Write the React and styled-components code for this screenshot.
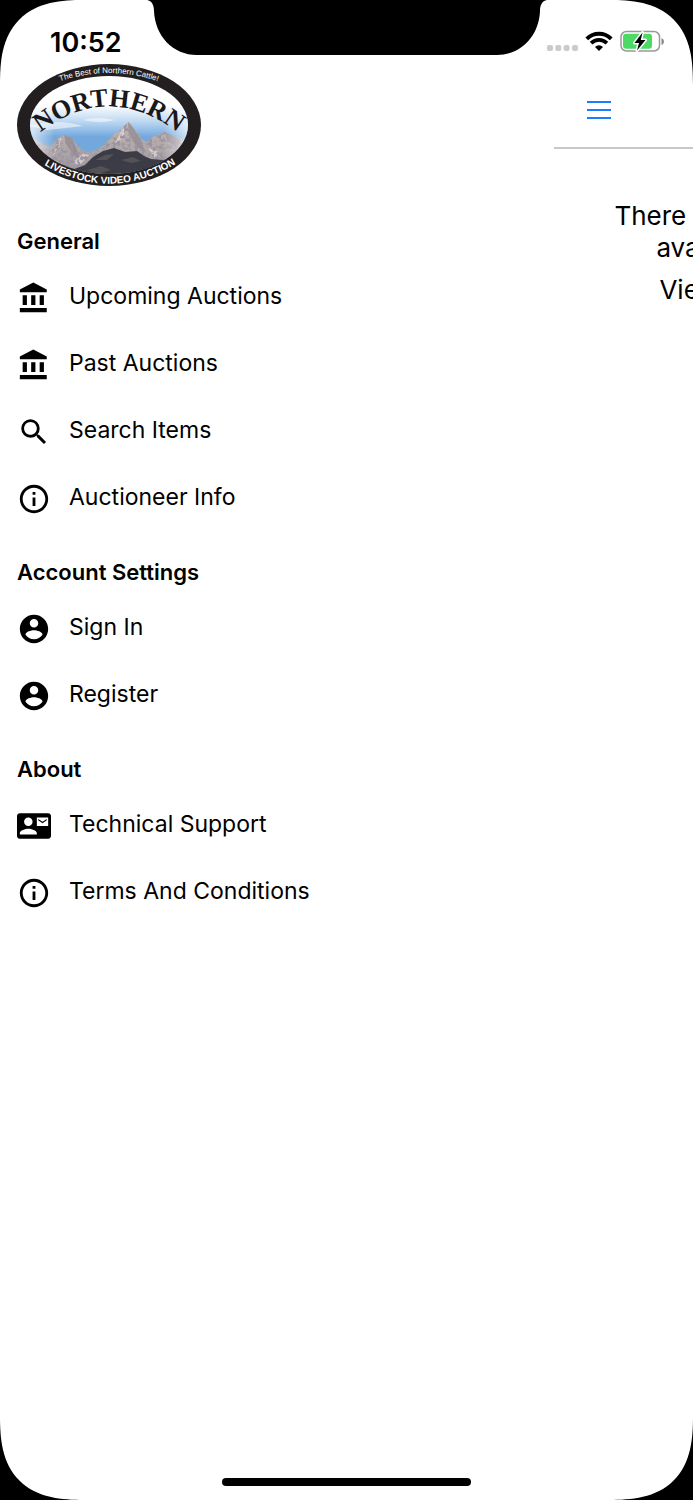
import React from "react";
import styled, { createGlobalStyle } from "styled-components";

const GlobalStyle = createGlobalStyle`
  * { box-sizing: border-box; }
  body {
    margin: 0;
    background: #000;
    color: #000;
    font-family: Inter, "Liberation Sans", sans-serif;
  }
`;

const Screen = styled.div`
  position: relative;
  display: flex;
  flex-direction: column;
  min-height: 100vh;
  background: #fff;
  overflow: hidden;
  border-radius: 72px;
  @supports (corner-shape: superellipse(1.4)) {
    border-radius: 84px;
    corner-shape: superellipse(1.4);
  }
`;

const Notch = styled.svg`
  position: absolute;
  top: 0;
  left: 50%;
  transform: translateX(-50%);
`;

const StatusBar = styled.header`
  display: flex;
  justify-content: space-between;
  align-items: flex-end;
  height: 64px;
  padding: 0 29px 12px 50px;
`;

const Clock = styled.time`
  font-size: 27px;
  line-height: 18px;
  font-weight: 600;
`;

const StatusIcons = styled.div`
  display: flex;
  align-items: flex-end;
  gap: 7px;
`;

const Content = styled.div`
  display: flex;
  flex: 1;
`;

const Drawer = styled.nav`
  flex: 0 0 80%;
  min-width: 0;
  padding-left: 17px;
`;

const LogoLink = styled.a`
  display: block;
  width: 184px;
  height: 122px;
  margin-bottom: 32px;
`;

const Section = styled.section`
  margin-bottom: 17px;
`;

const Heading = styled.h2`
  margin: 0;
  font-size: 22px;
  line-height: 46px;
  font-weight: 600;
`;

const List = styled.ul`
  margin: 0;
  padding: 0;
  list-style: none;
`;

const Item = styled.a`
  display: flex;
  align-items: center;
  gap: 18px;
  height: 67px;
  color: #000;
  text-decoration: none;
`;

const ItemIcon = styled.svg`
  flex: none;
  width: 34px;
  height: 34px;
  fill: currentColor;
`;

const ItemLabel = styled.span`
  padding-bottom: 4px;
  font-size: 23px;
  line-height: 32px;
`;

const Page = styled.main`
  flex: 1;
  min-width: 0;
  overflow: hidden;
`;

const PageBar = styled.div`
  display: flex;
  align-items: center;
  height: 85px;
  padding: 8px 0 0 33px;
  border-bottom: 2px solid #c8c8c8;
`;

const MenuButton = styled.button`
  display: flex;
  flex-direction: column;
  gap: 6px;
  width: 24px;
  padding: 0;
  border: 0;
  background: none;
`;

const MenuLine = styled.span`
  height: 2px;
  background: #1a7dff;
`;

const Message = styled.div`
  padding-top: 51px;
  font-size: 26px;
  line-height: 32px;
  white-space: nowrap;
`;

const MessageLine = styled.div`
  padding-left: ${(p) => p.$indent}px;
  margin-bottom: ${(p) => (p.$last ? 10 : 0)}px;
`;

const HomeIndicator = styled.div`
  align-self: center;
  width: 36%;
  height: 8px;
  margin-bottom: 14px;
  border-radius: 4px;
  background: #000;
`;

const PATHS = {
  bank: "M4 10v7h3v-7H4zm6 0v7h3v-7h-3zM2 22h19v-3H2v3zm14-12v7h3v-7h-3zm-4.500-9L2 6v2h19V6l-9.500-5z",
  search:
    "M15.500 14h-.79l-.28-.27A6.471 6.471 0 0 0 16 9.500 6.500 6.500 0 1 0 9.500 16c1.610 0 3.090-.590 4.230-1.570l.270.280v.790l5 4.990L20.490 19l-4.990-5zm-6 0C7.010 14 5 11.990 5 9.500S7.010 5 9.500 5 14 7.010 14 9.500 11.990 14 9.500 14z",
  info: "M11 17h2v-6h-2v6zm1-15C6.480 2 2 6.480 2 12s4.480 10 10 10 10-4.480 10-10S17.520 2 12 2zm0 18c-4.410 0-8-3.590-8-8s3.590-8 8-8 8 3.590 8 8-3.590 8-8 8zM11 9h2V7h-2v2z",
  person:
    "M12 2C6.480 2 2 6.480 2 12s4.480 10 10 10 10-4.480 10-10S17.520 2 12 2zm0 3c1.660 0 3 1.340 3 3s-1.340 3-3 3-3-1.340-3-3 1.340-3 3-3zm0 14.200c-2.500 0-4.710-1.280-6-3.220.030-1.990 4-3.080 6-3.080 1.990 0 5.970 1.090 6 3.080-1.290 1.940-3.500 3.220-6 3.220z",
  contact:
    "M21 8V7l-3 2-3-2v1l3 2 3-2zm1-5H2C.9 3 0 3.900 0 5v14c0 1.100.9 2 2 2h20c1.100 0 1.990-.9 1.990-2L24 5c0-1.100-.9-2-2-2zM8 6c1.660 0 3 1.340 3 3s-1.340 3-3 3-3-1.340-3-3 1.340-3 3-3zm6 12H2v-1c0-2 4-3.100 6-3.100s6 1.100 6 3.100v1zm8-6h-8V6h8v6z",
};

const SECTIONS = [
  {
    title: "General",
    items: [
      ["bank", "Upcoming Auctions"],
      ["bank", "Past Auctions"],
      ["search", "Search Items"],
      ["info", "Auctioneer Info"],
    ],
  },
  {
    title: "Account Settings",
    items: [
      ["person", "Sign In"],
      ["person", "Register"],
    ],
  },
  {
    title: "About",
    items: [
      ["contact", "Technical Support"],
      ["info", "Terms And Conditions"],
    ],
  },
];

function Logo() {
  return (
    <svg width="184" height="122" viewBox="0 0 184 122">
      <defs>
        <linearGradient id="sky" x1="0" y1="0" x2="0" y2="1">
          <stop offset="0.3" stopColor="#fff" />
          <stop offset="0.46" stopColor="#bfd9f2" />
          <stop offset="0.62" stopColor="#73a8dd" />
        </linearGradient>
        <linearGradient id="haze">
          <stop offset="0" stopColor="#fff" />
          <stop offset="0.16" stopColor="#fff" stopOpacity="0" />
          <stop offset="0.84" stopColor="#fff" stopOpacity="0" />
          <stop offset="1" stopColor="#fff" />
        </linearGradient>
        <linearGradient id="rock" x1="0" y1="0" x2="0" y2="1">
          <stop offset="0" stopColor="#c4b7b1" />
          <stop offset="1" stopColor="#95909a" />
        </linearGradient>
        <filter id="grain" x="0" y="0" width="1" height="1">
          <feTurbulence type="fractalNoise" baseFrequency="0.28" numOctaves="3" seed="4" result="n" />
          <feColorMatrix in="n" type="matrix" values="0 0 0 0 0.32  0 0 0 0 0.3  0 0 0 0 0.36  5 0 0 0 -2.3" result="d" />
          <feComposite in="d" in2="SourceGraphic" operator="in" result="t" />
          <feMerge>
            <feMergeNode in="SourceGraphic" />
            <feMergeNode in="t" />
          </feMerge>
        </filter>
        <clipPath id="window">
          <ellipse cx="92" cy="61" rx="79" ry="49" />
        </clipPath>
        <path id="arcTop" d="M36 20 Q92 -2 148 20" />
        <path id="arcName" d="M14 76 Q92 9 170 76" />
        <path id="arcBottom" d="M24 99 Q92 141 162 98" />
      </defs>
      <ellipse cx="92" cy="61" rx="92" ry="61" fill="#231f20" />
      <g clipPath="url(#window)">
        <rect x="12" y="11" width="160" height="100" fill="url(#sky)" />
        <path d="M12 62 Q40 54 66 62 Q50 64 30 66Z M66 56 Q80 52 98 56 Q84 60 66 56Z" fill="#fff" opacity="0.5" />
        <g filter="url(#grain)">
          <path
            d="M10 70L17 75L26 80L33 83L41 74L47 71L55 74L59 80L65 86L72 88L80 86L86 81L92 76L96 71L104 65L111 58L114 60L117 65L121 69L124 75L130 78L135 73L140 71L148 68L156 72L162 74L174 78V122H10Z"
            fill="url(#rock)"
          />
          <path d="M47 71L49 80L56 90L63 96L60 86L55 74Z M111 58L112 70L119 82L128 88L124 76L117 65Z M148 68L150 76L160 84L164 76Z" fill="#7d7680" opacity="0.5" />
          <path d="M41 76L45 73L42 84L36 92Z M104 67L109 62L106 74L98 80Z M66 90L72 91L62 102L56 98Z M131 84L142 88L138 94Z M31 94L42 98L55 105L44 104Z" fill="#efe6e4" opacity="0.6" />
        </g>
        <path d="M28 98L40 102L52 107L60 104L68 101L76 93L86 87L97 84L108 88L120 87L127 92L134 95L146 96L162 92V122H28Z" fill="#3b3c46" />
        <path d="M78 96L88 91L97 90L90 96Z M104 96L116 93L124 97L114 99Z M70 106L84 102L94 106L80 110Z" fill="#7a7270" opacity="0.4" />
        <rect x="12" y="11" width="160" height="100" fill="url(#haze)" opacity="0.7" />
        <path d="M24 94 Q92 136 164 92" fill="none" stroke="#231f20" strokeWidth="8" />
      </g>
      <text fontFamily="Liberation Sans, sans-serif" fontSize="8" fill="#fff" textAnchor="middle">
        <textPath href="#arcTop" startOffset="50%">The Best of Northern Cattle!</textPath>
      </text>
      <text
        fontFamily="Liberation Serif, serif"
        fontSize="26"
        fontWeight="700"
        fill="#1b1819"
        textAnchor="middle"
      >
        <textPath href="#arcName" startOffset="50%">NORTHERN</textPath>
      </text>
      <text
        fontFamily="Liberation Sans Narrow, Liberation Sans, sans-serif"
        fontSize="10"
        fontWeight="700"
        fill="#fff"
        textAnchor="middle"
      >
        <textPath href="#arcBottom" startOffset="50%">LIVESTOCK VIDEO AUCTION</textPath>
      </text>
    </svg>
  );
}

function Status() {
  return (
    <StatusBar>
      <Clock>10:52</Clock>
      <StatusIcons>
        <svg width="31" height="7" viewBox="0 0 31 7" fill="#cbcbcb">
          <rect width="6" height="6" rx="2" />
          <rect x="8.300" width="6" height="6" rx="2" />
          <rect x="16.600" width="6" height="6" rx="2" />
          <rect x="25" width="6" height="6" rx="2" />
        </svg>
        <svg width="28" height="21" viewBox="0 0 28 21" fill="none" stroke="#000">
          <path d="M1.800 7.800A17.300 17.300 0 0 1 26.200 7.800" strokeWidth="4" />
          <path d="M6.100 12.100A11.200 11.200 0 0 1 21.900 12.100" strokeWidth="3.800" />
          <path d="M14 20L10 16A5.700 5.700 0 0 1 18 16Z" fill="#000" stroke="none" />
        </svg>
        <svg width="44" height="22" viewBox="0 0 44 22">
          <rect x="1" y="1.500" width="38.500" height="19.500" rx="5.500" fill="none" stroke="#999" strokeWidth="1.500" />
          <path d="M41.500 8Q44 9 44 11.500T41.500 15Z" fill="#888" />
          <rect x="3" y="3.800" width="29" height="15" rx="3" fill="#4cd964" />
          <path
            d="M22.500 2.500L14.500 13H19L17 20.500L25.500 10H20.800Z"
            fill="#000"
            stroke="#fff"
            strokeWidth="3"
            paintOrder="stroke"
            strokeLinejoin="round"
          />
        </svg>
      </StatusIcons>
    </StatusBar>
  );
}

export default function App() {
  return (
    <>
      <GlobalStyle />
      <Screen>
        <Notch width="400" height="55" viewBox="0 0 400 55">
          <path d="M0 0C5 1 7 5 7 11C8 36 26 55 50 55H350C374 55 392 36 393 11C393 5 395 1 400 0Z" />
        </Notch>
        <Status />
        <Content>
          <Drawer>
            <LogoLink href="#" aria-label="Northern Livestock Video Auction">
              <Logo />
            </LogoLink>
            {SECTIONS.map((section) => (
              <Section key={section.title}>
                <Heading>{section.title}</Heading>
                <List>
                  {section.items.map(([icon, label]) => (
                    <li key={label}>
                      <Item href="#">
                        <ItemIcon viewBox="0 0 24 24">
                          <path d={PATHS[icon]} />
                        </ItemIcon>
                        <ItemLabel>{label}</ItemLabel>
                      </Item>
                    </li>
                  ))}
                </List>
              </Section>
            ))}
          </Drawer>
          <Page>
            <PageBar>
              <MenuButton type="button" aria-label="Menu">
                <MenuLine />
                <MenuLine />
                <MenuLine />
              </MenuButton>
            </PageBar>
            <Message>
              <MessageLine $indent={60}>There</MessageLine>
              <MessageLine $indent={102} $last>
                ava
              </MessageLine>
              <MessageLine $indent={105}>Vie</MessageLine>
            </Message>
          </Page>
        </Content>
        <HomeIndicator />
      </Screen>
    </>
  );
}
